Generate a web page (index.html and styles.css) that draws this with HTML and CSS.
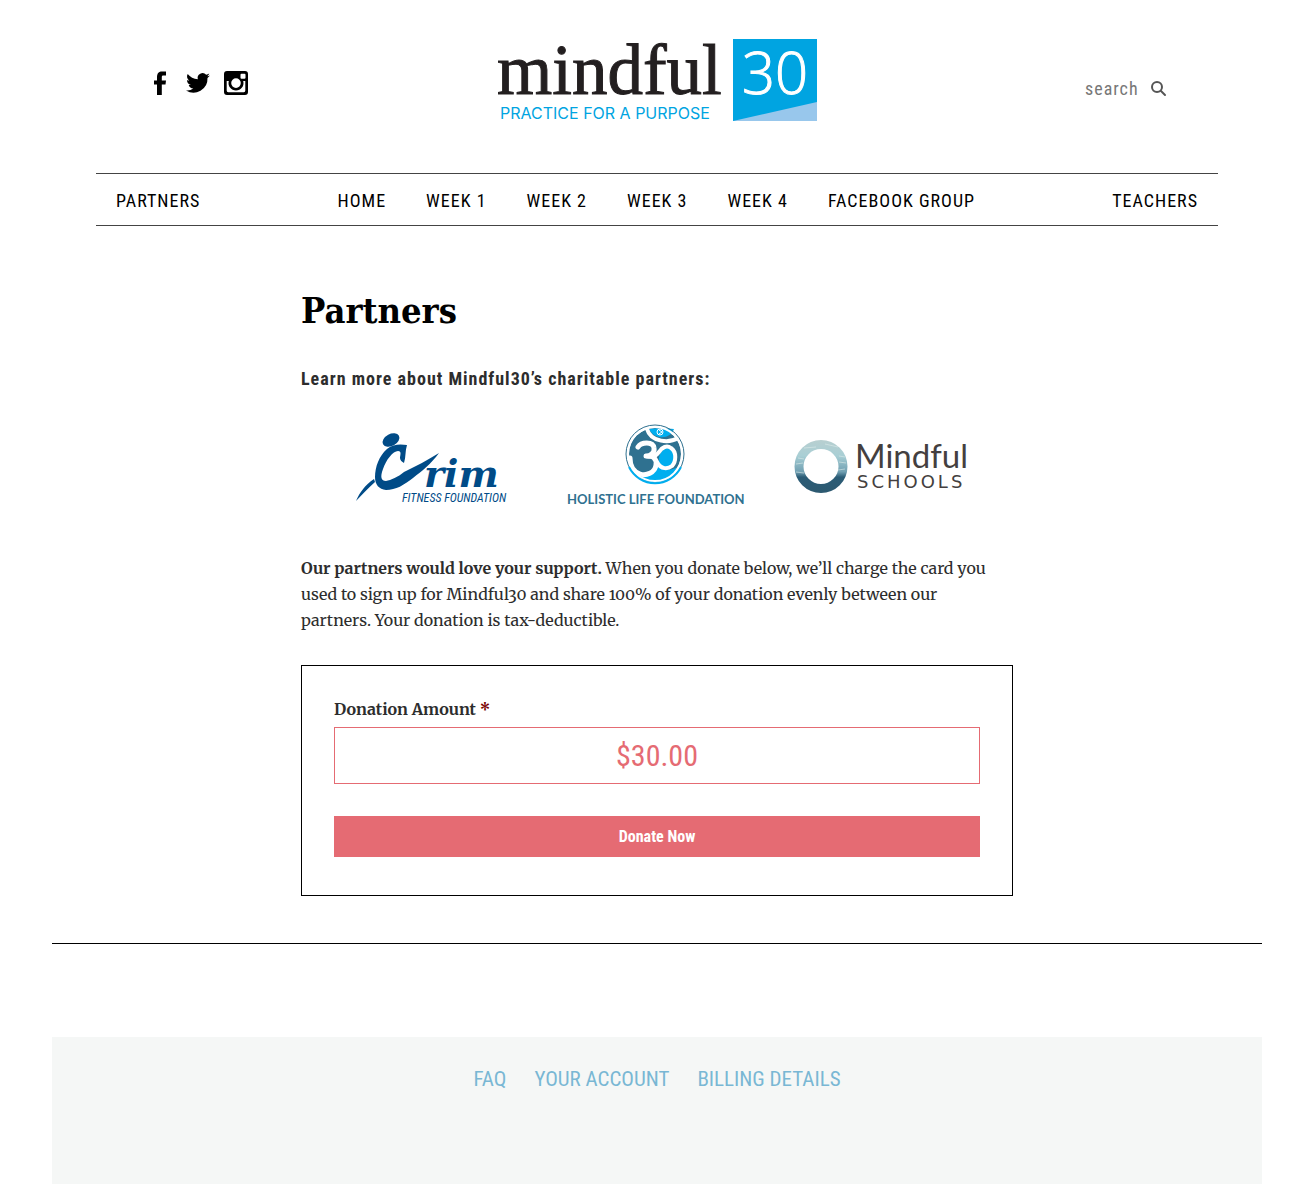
FILE: index.html
```
<!DOCTYPE html>
<html lang="en">
<head>
<meta charset="utf-8">
<meta name="viewport" content="width=device-width, initial-scale=1">
<title>Partners – Mindful30</title>
<link rel="stylesheet" href="styles.css">
</head>
<body>
<div class="page">
  <header class="masthead">
    <div class="social">
      <a href="#facebook" aria-label="Facebook"><svg width="24" height="24" viewBox="-6 0 24 24"><path d="M3 24V13.500H0v-4h3V6.500C3 2 5 .5 8 .5h4v4H9.500C8 4.500 7.800 5 7.800 6.500v3H12l-.5 4H7.800V24z"/></svg></a>
      <a href="#twitter" aria-label="Twitter"><svg width="24" height="20" viewBox="0 0 24 20"><path d="M24 2.400a9.800 9.800 0 0 1-2.800.8A4.900 4.900 0 0 0 23.300.5a9.900 9.900 0 0 1-3.100 1.200 4.900 4.900 0 0 0-8.400 4.500C7.700 6 4.100 4 1.700 1a4.900 4.900 0 0 0 1.500 6.600 4.900 4.900 0 0 1-2.200-.6v.1a4.900 4.900 0 0 0 3.900 4.800 4.900 4.900 0 0 1-2.200.1 4.900 4.900 0 0 0 4.600 3.400A9.900 9.900 0 0 1 0 17.400 14 14 0 0 0 21.500 5z"/></svg></a>
      <a href="#instagram" aria-label="Instagram"><svg width="24" height="24" viewBox="0 0 24 24"><path fill-rule="evenodd" d="M3 0h18a3 3 0 0 1 3 3v18a3 3 0 0 1-3 3H3a3 3 0 0 1-3-3V3a3 3 0 0 1 3-3zm14.500 2.700a1 1 0 0 0-1 1v3a1 1 0 0 0 1 1h3a1 1 0 0 0 1-1v-3a1 1 0 0 0-1-1zM2.700 10v9.500a1.700 1.700 0 0 0 1.800 1.800h15a1.700 1.700 0 0 0 1.800-1.800V10h-2.100a7.500 7.500 0 1 1-14.400 0zM12 7.300a4.800 4.800 0 1 0 0 9.600 4.800 4.800 0 0 0 0-9.600z"/></svg></a>
    </div>
    <a class="brand" href="#home" aria-label="Mindful30, practice for a purpose">
      <svg width="320" height="83" viewBox="0 0 320 83">
        <text class="brand-word" x="0" y="55">mindful</text>
        <text class="brand-tag" x="3" y="80">PRACTICE FOR A PURPOSE</text>
        <path fill="#00a4e1" d="M236 0h84v82h-84z"/>
        <path fill="#98c7ec" d="M236 82l84-19v19z"/>
        <text class="brand-num" x="278" y="55">30</text>
      </svg>
    </a>
    <form class="search" role="search">
      <input type="text" aria-label="Search" placeholder="search">
      <button type="submit" aria-label="Submit search"><svg width="15" height="15" viewBox="0 0 15 15"><circle cx="6" cy="6" r="5"/><path d="M10 10l4 4"/></svg></button>
    </form>
  </header>
  <nav class="menu">
    <a href="#partners">PARTNERS</a>
    <div class="menu-center">
      <a href="#home">HOME</a>
      <a href="#week1">WEEK 1</a>
      <a href="#week2">WEEK 2</a>
      <a href="#week3">WEEK 3</a>
      <a href="#week4">WEEK 4</a>
      <a href="#group">FACEBOOK GROUP</a>
    </div>
    <a href="#teachers">TEACHERS</a>
  </nav>
  <main class="content">
    <h1>Partners</h1>
    <h2>Learn more about Mindful30’s charitable partners:</h2>
    <div class="logos">
      <a href="#crim" aria-label="Crim Fitness Foundation">
        <svg width="153" height="84" viewBox="0 0 153 84">
          <g fill="#004b87">
            <ellipse cx="35" cy="20" rx="9" ry="6" transform="rotate(-28 35 20)"/>
            <path d="M51 25C49 31 50 37 48 43c-2-1-4-3-4-5 0-3 2-7-2-7-5 0-12 9-15 18-3 8-2 12 3 12 5-1 12-4 18-9 12-6 24-12 35-19-8 11-17 18-26 25-9 7-17 12-27 12-7-1-11-5-11-13 0-10 4-21 12-28 6-5 13-5 20-4z"/>
            <path d="M0 81C4 72 9 65 18 59l1 3C12 68 6 75 0 81z"/>
          </g>
          <text class="crim-word" x="68" y="67">rim</text>
          <text class="crim-sub" x="46" y="82">FITNESS FOUNDATION</text>
        </svg>
      </a>
      <a href="#holistic" aria-label="Holistic Life Foundation">
        <svg width="176" height="84" viewBox="-3 0 176 84">
          <circle cx="88" cy="34" r="26" fill="#2f7190"/>
          <path fill="#00aeef" d="M72 56c8-2 14-5 17-12l7 4c4 3 10 2 14-1-3 9-12 15-22 15-7 0-12-2-16-6zM92 42c-1-8 4-14 10-14 7 2 6 13 2 17-5 4-11 3-12-3z"/>
          <g fill="none" stroke="#fff" stroke-linecap="round" stroke-linejoin="round">
            <path stroke-width="5" d="M71 27c3-5 15-6 16 1 1 5-4 8-8 8 6-1 11 2 10 9-1 8-10 11-16 9-6-2-10-8-10-16"/>
            <path stroke-width="4" d="M79 36c6 2 10 0 13-4 3-5 8-7 12-4 6 4 5 14 1 18-4 3-11 4-15-4"/>
          </g>
          <path fill="#00aeef" d="M82 9c8-1 17-1 25 0-3 10-19 12-25 0z"/>
          <path fill="none" stroke="#fff" stroke-width="4" stroke-linecap="round" d="M80 9c4 14 23 14 31 9"/>
          <circle cx="93" cy="12" r="3" fill="none" stroke="#fff"/>
          <path fill="none" stroke="#fff" d="M92 10l3 2-3 2"/>
          <circle cx="88" cy="34" r="27" fill="none" stroke="#fff" stroke-width="2"/>
          <circle cx="88" cy="34" r="29" fill="none" stroke="#2f7190"/>
          <path fill="none" stroke="#00aeef" stroke-width="2" d="M62 47a29 29 0 0 0 52 0"/>
          <text class="holistic-word" x="0" y="84">HOLISTIC LIFE FOUNDATION</text>
        </svg>
      </a>
      <a href="#schools" aria-label="Mindful Schools">
        <svg width="176" height="84" viewBox="0 0 176 84">
          <defs><linearGradient id="sea" x2="0" y2="1"><stop offset="0" stop-color="#b8cfd0"/><stop offset=".3" stop-color="#a9cfd5"/><stop offset=".6" stop-color="#71a0b2"/><stop offset=".7" stop-color="#2b5c76"/><stop offset="1" stop-color="#2d5970"/></linearGradient></defs>
          <path fill="url(#sea)" fill-rule="evenodd" d="M27 20a26 26 0 1 1 0 53 26 26 0 0 1 0-53zm0 9a17 17 0 1 0 0 35 17 17 0 0 0 0-35z"/>
          <path fill="none" stroke="#dcebea" stroke-opacity=".6" d="M10 28l12-1M31 24l13 3M4 38l6 1M45 36l6 1M2 44l7-1M45 42l7 1M2 52l8 1M44 50l7-1"/>
          <text class="schools-word" x="61" y="48">Mindful</text>
          <text class="schools-sub" x="63" y="68">SCHOOLS</text>
        </svg>
      </a>
    </div>
    <p><strong>Our partners would love your support.</strong> When you donate below, we’ll charge the card you used to sign up for Mindful30 and share 100% of your donation evenly between our partners. Your donation is tax-deductible.</p>
    <form class="donate">
      <label for="amount">Donation Amount <span class="required">*</span></label>
      <input id="amount" type="text" value="$30.00" required>
      <button type="submit">Donate Now</button>
    </form>
  </main>
  <footer class="footer">
    <nav class="footer-links">
      <a href="#faq">FAQ</a>
      <a href="#account">YOUR ACCOUNT</a>
      <a href="#billing">BILLING DETAILS</a>
    </nav>
  </footer>
</div>
</body>
</html>
```
FILE: styles.css
```
* { box-sizing: border-box; }
body {
  margin: 0;
  padding: 0 44px 20px 52px;
  background: #fff;
  color: #2d2d2d;
  font-family: Merriweather, "Noto Serif", "DejaVu Serif Condensed", serif;
  font-size: 16px;
  font-variant-numeric: oldstyle-nums;
  line-height: 26px;
}
a { color: inherit; text-decoration: none; }
svg { display: block; overflow: visible; }
.page { max-width: 1210px; margin: 0 auto; }

.masthead {
  display: grid;
  grid-template-columns: 1fr auto 1fr;
  align-items: center;
  margin: 0 44px;
  padding: 39px 52px 51px;
}
.social { display: flex; align-items: center; gap: 14px; padding-top: 4px; }
.brand-word { font: 71px "Liberation Serif", serif; fill: #231f20; stroke: #231f20; }
.brand-tag { font: 16px Inter, sans-serif; fill: #00a4e1; }
.brand-num { font: 300 58px "Open Sans", sans-serif; fill: #fff; stroke: #fff; text-anchor: middle; }

.search { display: flex; justify-content: flex-end; align-items: center; gap: 8px; padding-top: 16px; }
.search input {
  width: 58px;
  padding: 0;
  border: 0;
  background: none;
  color: #777;
  font: 18px "Roboto Condensed", Roboto, sans-serif;
  letter-spacing: 1px;
}
.search input::placeholder { color: #777; opacity: 1; }
.search button { padding: 0; border: 0; background: none; }
.search svg { fill: none; stroke: #555; stroke-width: 2; stroke-linecap: round; }

.menu {
  display: flex;
  justify-content: space-between;
  margin: 0 44px;
  padding: 14px 20px 12px;
  border: solid #444;
  border-width: 1px 0;
  color: #000;
  font: 18px/25px "Roboto Condensed", Roboto, sans-serif;
  letter-spacing: 1px;
}
.menu-center { display: flex; gap: 40px; }

.content { max-width: 712px; margin: 0 auto; padding-top: 60px; }
h1 { margin: 0; color: #000; font: bold 36px/48px "DejaVu Serif Condensed", serif; }
h2 { margin: 32px 0 28px; font: bold 18px/26px "Roboto Condensed", Roboto, sans-serif; letter-spacing: 1px; }
.logos { display: flex; justify-content: space-between; padding: 0 43px 0 55px; }
.crim-word { font: italic bold 38px "DejaVu Serif", serif; fill: #004b87; }
.crim-sub { font: italic 12px "Roboto Condensed", sans-serif; fill: #004b87; }
.holistic-word { font: bold 13px Lato, sans-serif; fill: #2f7190; }
.schools-word { font: 33px Lato, sans-serif; fill: #443f40; }
.schools-sub { font: 18px "DejaVu Sans", sans-serif; fill: #443f40; letter-spacing: 3px; }
p { margin: 51px 0 32px; padding-right: 12px; }

.donate { display: grid; padding: 30px 32px 38px; border: 1px solid #000; }
.donate label { margin-bottom: 5px; font-weight: bold; }
.required { color: #790000; }
.donate input {
  width: 100%;
  height: 57px;
  margin-bottom: 32px;
  padding: 0;
  border: 1px solid #e56b73;
  color: #e56b73;
  font: 30px "Roboto Condensed", Roboto, sans-serif;
  text-align: center;
}
.donate button { padding: 10px; border: 0; background: #e56b73; color: #fff; font: bold 16px/21px "Roboto Condensed", Roboto, sans-serif; }

.footer { margin-top: 47px; padding-top: 93px; border-top: 1px solid #000; }
.footer-links {
  display: flex;
  justify-content: center;
  gap: 28px;
  padding: 29px 20px 92px;
  background: #f5f7f6;
  color: #79b7d4;
  font: 21px/26px "Roboto Condensed", Roboto, sans-serif;
}
```
